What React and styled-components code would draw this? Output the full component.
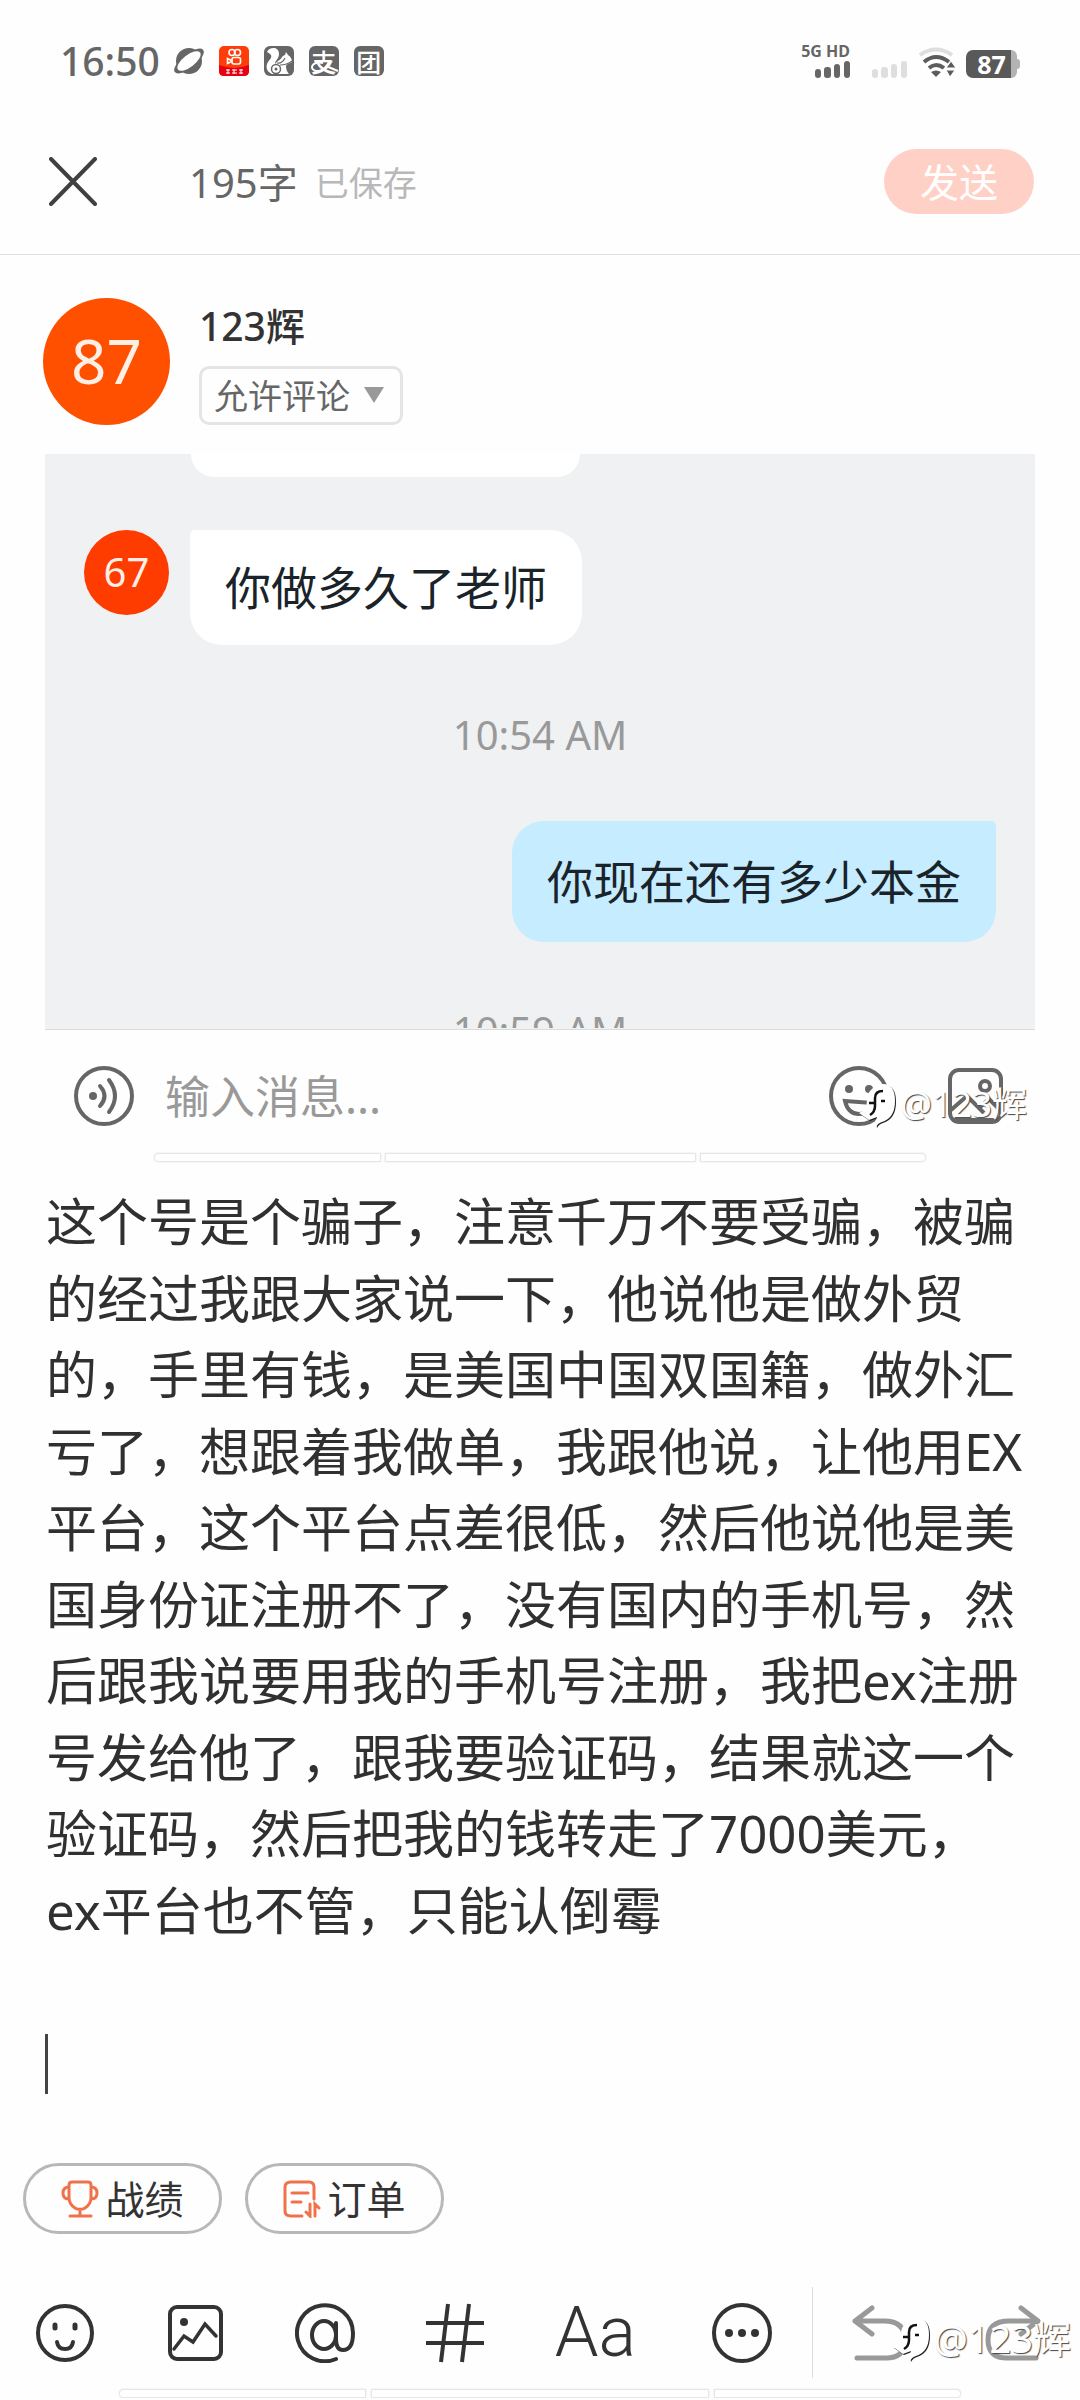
import React from 'react';
import styled, { createGlobalStyle } from 'styled-components';

const story =
  '这个号是个骗子，注意千万不要受骗，被骗的经过我跟大家说一下，他说他是做外贸的，手里有钱，是美国中国双国籍，做外汇亏了，想跟着我做单，我跟他说，让他用EX平台，这个平台点差很低，然后他说他是美国身份证注册不了，没有国内的手机号，然后跟我说要用我的手机号注册，我把ex注册号发给他了，跟我要验证码，结果就这一个验证码，然后把我的钱转走了7000美元，ex平台也不管，只能认倒霉\n\n';

const App = () => {
  return (
    <Page>
      <GlobalStyle />
      <StatusBar>
        <Clock>16:50</Clock>
        <StatusIcons>
          <PlanetIcon />
          <VideoAppIcon />
          <SquirrelIcon />
          <CharIcon char="支" swoosh />
          <CharIcon char="团" />
        </StatusIcons>
        <Signals>
          <Network>
            <span>5G HD</span>
            <SignalBars color="#666" />
          </Network>
          <SignalBars color="#dedede" />
          <WifiIcon />
          <Battery />
        </Signals>
      </StatusBar>

      <Header>
        <IconButton aria-label="关闭">
          <CloseIcon />
        </IconButton>
        <WordCount>195字</WordCount>
        <Saved>已保存</Saved>
        <SendButton>发送</SendButton>
      </Header>

      <Author>
        <Avatar size={127} font={62} bg="#ff5000">87</Avatar>
        <AuthorInfo>
          <AuthorName>123辉</AuthorName>
          <SelectWrap>
            <Select aria-label="评论权限" defaultValue="allow">
              <option value="allow">允许评论</option>
              <option value="deny">禁止评论</option>
            </Select>
            <Triangle viewBox="0 0 20 16">
              <path d="M0 0h20L10 16z" fill="#999" />
            </Triangle>
          </SelectWrap>
        </AuthorInfo>
      </Author>

      <Picture>
        <Chat>
          <Messages>
            <CutBubble />
            <Incoming>
              <Avatar size={85} font={40} bg="#ff3c00">67</Avatar>
              <Bubble>你做多久了老师</Bubble>
            </Incoming>
            <Time>10:54 AM</Time>
            <Outgoing>
              <Bubble mine>你现在还有多少本金</Bubble>
            </Outgoing>
            <Time>10:59 AM</Time>
          </Messages>
        </Chat>
        <InputRow>
          <IconButton aria-label="语音">
            <VoiceIcon />
          </IconButton>
          <MessageInput aria-label="消息" placeholder="输入消息..." />
          <RowIcons>
            <IconButton aria-label="表情">
              <GrinIcon />
            </IconButton>
            <IconButton aria-label="图片">
              <PhotoIcon />
            </IconButton>
          </RowIcons>
          <Watermark size={35} right={8} bottom={24}>
            <MarkIcon />
            @123辉
          </Watermark>
        </InputRow>
        <Segments side={109} gap={4}>
          <Segment grow={227} first />
          <Segment grow={312} />
          <Segment grow={226} last />
        </Segments>
      </Picture>

      <Editor>
        <TextArea aria-label="正文" rows={12} spellCheck={false} defaultValue={story} />
        <Caret />
      </Editor>

      <Chips>
        <Chip>
          <TrophyIcon />
          战绩
        </Chip>
        <Chip>
          <OrderIcon />
          订单
        </Chip>
      </Chips>

      <Toolbar>
        <Tools>
          <IconButton aria-label="表情">
            <SmileIcon />
          </IconButton>
          <IconButton aria-label="图片">
            <ImageIcon />
          </IconButton>
          <IconButton aria-label="提及">
            <AtIcon />
          </IconButton>
          <IconButton aria-label="话题">
            <HashIcon />
          </IconButton>
          <FontButton>Aa</FontButton>
          <IconButton aria-label="更多">
            <MoreIcon />
          </IconButton>
        </Tools>
        <History>
          <IconButton aria-label="撤销">
            <UndoIcon />
          </IconButton>
          <IconButton aria-label="重做">
            <UndoIcon flip />
          </IconButton>
        </History>
        <Watermark size={38} right={9} bottom={15}>
          <MarkIcon />
          @123辉
        </Watermark>
      </Toolbar>
      <Segments side={119} gap={5}>
        <Segment grow={246} first />
        <Segment grow={339} />
        <Segment grow={246} last />
      </Segments>
    </Page>
  );
};

export default App;

/* icons */

const PlanetIcon = () => (
  <svg width="30" height="30" viewBox="0 0 30 30">
    <circle cx="15" cy="15" r="13" fill="#666" />
    <ellipse cx="15" cy="15" rx="18" ry="7" transform="rotate(-38 15 15)" fill="#666" />
    <ellipse cx="15" cy="15" rx="14" ry="6" transform="rotate(-38 15 15)" fill="#fff" />
  </svg>
);

const VideoAppIcon = () => (
  <svg width="30" height="30" viewBox="0 0 30 30">
    <rect width="30" height="30" rx="5" fill="#ff3d0a" />
    <path d="M0 19q15 6 30 0v6q0 5-5 5H5q-5 0-5-5z" fill="#e60012" />
    <g fill="none" stroke="#fff" strokeWidth="1.6">
      <circle cx="13" cy="6.500" r="3" />
      <circle cx="18.500" cy="6.500" r="3" />
      <rect x="13" y="11.500" width="8.500" height="6.500" rx="2" />
      <path d="M12.500 14.500l-4-2v5l4-2z" />
    </g>
    <path d="M7 24h4M7 27h4M9 23v5M13 24h5M13 27h5M15 23v5M20 24h4M20 27h4M22 23v5" stroke="#fff" strokeWidth="1" />
  </svg>
);

const SquirrelIcon = () => (
  <svg width="30" height="30" viewBox="0 0 30 30">
    <rect width="30" height="30" rx="6" fill="#666" />
    <path
      d="M3 6C5 1 15 0 15 8c0 5-4 6-4 10 3-4 6-4 7-7 1-1 2-2 3-2l1-3 2 3c3 2 4 4 4 7-2 2-5 1-6 4 0 3 1 6 3 8H8C3 26 1 21 4 16c2-3 4-4 3-7C6 8 5 7 3 6z"
      fill="#fff"
    />
    <circle cx="12" cy="23" r="4.500" fill="none" stroke="#666" strokeWidth="1.500" />
    <circle cx="12" cy="23" r="1.500" fill="#666" />
    <path d="M13 17q5 1 8-5M16 19q7 0 12-4" fill="none" stroke="#666" strokeWidth="1.200" />
  </svg>
);

const CharIcon = ({ char, swoosh }) => (
  <AppBadge>
    {char}
    {swoosh && (
      <Swoosh viewBox="0 0 30 30">
        <path d="M14 17c-12-3-15 8-5 8 5 0 9-5 11-9M17 20l12 5" fill="none" stroke="#fff" strokeWidth="2" />
      </Swoosh>
    )}
  </AppBadge>
);

const SignalBars = ({ color }) => (
  <svg width="35" height="17" viewBox="0 0 35 17" fill={color}>
    <rect x="0" y="8" width="6" height="9" rx="3" />
    <rect x="9" y="6" width="7" height="11" rx="3" />
    <rect x="19" y="3" width="6" height="14" rx="3" />
    <rect x="29" y="0" width="6" height="17" rx="3" />
  </svg>
);

const WifiIcon = () => (
  <svg width="37" height="31" viewBox="0 0 37 31" fill="none">
    <path d="M2 8Q18 -3 34 8" stroke="#dedede" strokeWidth="4" />
    <path d="M6 15Q18 5 31 15M11 21Q18 15 26 21" stroke="#5c5c5c" strokeWidth="4" />
    <path d="M13 25q5-3 10 0l-5 5z" fill="#5c5c5c" />
    <path d="M28 21l5-7 5 7zM28 23h9l-5 7z" fill="#5c5c5c" stroke="#fff" strokeWidth="1" />
  </svg>
);

const Battery = () => (
  <BatteryBody>
    <BatteryLevel>87</BatteryLevel>
    <BatteryRest />
    <BatteryNub />
  </BatteryBody>
);

const CloseIcon = () => (
  <svg width="48" height="49" viewBox="0 0 48 49">
    <path d="M2 2l44 45M46 2L2 47" stroke="#404040" strokeWidth="4" strokeLinecap="round" />
  </svg>
);

const VoiceIcon = () => (
  <svg width="60" height="60" viewBox="0 0 60 60" fill="none" stroke="#666" strokeWidth="4" strokeLinecap="round">
    <circle cx="30" cy="30" r="28" />
    <circle cx="19" cy="30" r="4" fill="#666" stroke="none" />
    <path d="M26 20q9 10 0 20M35 14q12 16 0 32" />
  </svg>
);

const GrinIcon = () => (
  <svg width="60" height="60" viewBox="0 0 60 60" fill="none" stroke="#666" strokeWidth="4">
    <circle cx="30" cy="30" r="28" />
    <circle cx="20" cy="23" r="4" fill="#666" stroke="none" />
    <circle cx="40" cy="23" r="4" fill="#666" stroke="none" />
    <path d="M16 35l28 2q-3 11-14 11T16 35z" />
  </svg>
);

const PhotoIcon = () => (
  <svg width="55" height="56" viewBox="0 0 55 56" fill="none" stroke="#666" strokeWidth="4">
    <rect x="2" y="2" width="51" height="52" rx="9" />
    <circle cx="37" cy="18" r="5" />
    <path d="M3 42l16-14 17 17M31 40l10-9 11 11M4 52h47" />
  </svg>
);

const TrophyIcon = () => (
  <svg width="38" height="38" viewBox="0 0 38 38" fill="none" stroke="#f0724a" strokeWidth="3" strokeLinecap="round">
    <path d="M8 5q0-3 3-3h16q3 0 3 3v13q0 6-6 10-5 3-10 0-6-4-6-10zM8 7q-6 0-6 6t6 6M30 7q6 0 6 6t-6 6M19 29v7M9 36h21" />
  </svg>
);

const OrderIcon = () => (
  <svg width="38" height="38" viewBox="0 0 38 38" fill="none" stroke="#f0724a" strokeWidth="3" strokeLinecap="round">
    <path d="M19 36H8q-6 0-6-5V7q0-5 6-5h18q5 0 5 5v12M9 13h16M9 22h9M27 24v12l-4-4M32 36V24l4 4" />
  </svg>
);

const SmileIcon = () => (
  <svg width="60" height="60" viewBox="0 0 60 60" fill="none" stroke="#333" strokeWidth="4" strokeLinecap="round">
    <circle cx="30" cy="30" r="27" />
    <path d="M20 22v3M40 22v3" strokeWidth="5" />
    <path d="M22 39q1 7 8 7t8-7" />
  </svg>
);

const ImageIcon = () => (
  <svg width="55" height="56" viewBox="0 0 55 56" fill="none" stroke="#333" strokeWidth="4" strokeLinecap="round">
    <rect x="2" y="2" width="51" height="52" rx="7" />
    <circle cx="16" cy="17" r="4" fill="#333" stroke="none" />
    <path d="M6 44l10-13 9 6 12-18 11 12" strokeWidth="3.500" />
  </svg>
);

const AtIcon = () => (
  <svg width="60" height="60" viewBox="0 0 60 60" fill="none" stroke="#333" strokeWidth="4" strokeLinecap="round">
    <path d="M41 56A28 28 0 1 1 58 30c0 10-3 17-10 17-5 0-7-4-7-11V20" />
    <ellipse cx="29" cy="32" rx="12" ry="14" />
  </svg>
);

const HashIcon = () => (
  <svg width="58" height="60" viewBox="0 0 58 60" fill="none" stroke="#333" strokeWidth="4">
    <path d="M0 20h58M0 40h58M22 1l-7 58M43 1l-7 58" />
  </svg>
);

const MoreIcon = () => (
  <svg width="60" height="60" viewBox="0 0 60 60">
    <circle cx="30" cy="30" r="28" fill="none" stroke="#333" strokeWidth="4" />
    <g fill="#333">
      <circle cx="17" cy="30" r="4" />
      <circle cx="30" cy="30" r="4" />
      <circle cx="43" cy="30" r="4" />
    </g>
  </svg>
);

const UndoIcon = ({ flip }) => (
  <svg width="56" height="56" viewBox="0 0 56 56" fill="none" stroke="#999" strokeWidth="5" strokeLinecap="round" strokeLinejoin="round">
    <path transform={flip ? 'translate(56 0) scale(-1 1)' : undefined} d="M20 3L3 16l17 13M3 16h29q21 0 21 19T32 53H5" />
  </svg>
);

const mark = 'M13 5Q17 0 24 0q12 0 12 17 0 17-13 21-4 1-6 5l-1-6q2-2 2-4l-8 3-10-7q8-3 8-13 0-7 5-11z';

const MarkIcon = () => (
  <svg width="38" height="45" viewBox="0 0 38 45">
    <path transform="translate(1 1)" d={mark} fill="#222" />
    <path d={mark} fill="#fff" />
    <path d="M24 7q-8 0-8 7v8q0 6-5 9M10 19h5M22 17h4" fill="none" stroke="#111" strokeWidth="2.500" />
  </svg>
);

/* styles */

const GlobalStyle = createGlobalStyle`
  * {
    box-sizing: border-box;
  }
  body {
    margin: 0;
    background: #fefefe;
    font-family: "Noto Sans", "Noto Sans CJK SC", sans-serif;
    color: #333;
  }
  svg {
    display: block;
    flex: none;
  }
  button, select, input, textarea {
    font-family: inherit;
    color: inherit;
    margin: 0;
    padding: 0;
    border: none;
    background: none;
    outline: none;
  }
`;

const Page = styled.div`
  display: flex;
  flex-direction: column;
  overflow: hidden;
`;

const StatusBar = styled.div`
  display: flex;
  align-items: center;
  height: 108px;
  padding: 14px 60px 0 60px;
`;

const Clock = styled.span`
  font-size: 39px;
  font-weight: 500;
  line-height: 40px;
  color: #666;
`;

const StatusIcons = styled.div`
  display: flex;
  gap: 15px;
  margin-left: 14px;
`;

const AppBadge = styled.span`
  position: relative;
  display: block;
  width: 30px;
  height: 30px;
  border-radius: 6px;
  background: #666;
  color: #fff;
  font-family: "Noto Sans CJK SC", sans-serif;
  font-size: 25px;
  font-weight: 500;
  line-height: 30px;
  text-align: center;
`;

const Swoosh = styled.svg`
  position: absolute;
  inset: 0;
`;

const Signals = styled.div`
  display: flex;
  align-items: flex-end;
  gap: 11px;
  margin-left: auto;
`;

const Network = styled.div`
  display: flex;
  flex-direction: column;
  align-items: flex-end;
  gap: 2px;
  margin-right: 11px;
  font-size: 16px;
  font-weight: 700;
  line-height: 15px;
  color: #666;
`;

const BatteryBody = styled.div`
  display: flex;
  align-items: center;
  height: 28px;
`;

const BatteryLevel = styled.span`
  width: 45px;
  padding-left: 6px;
  border-radius: 7px 0 0 7px;
  background: #595959;
  color: #fff;
  font-size: 25px;
  font-weight: 700;
  line-height: 28px;
  text-align: center;
`;

const BatteryRest = styled.span`
  width: 6px;
  height: 28px;
  border-radius: 0 7px 7px 0;
  background: #b3b3b3;
`;

const BatteryNub = styled.span`
  width: 3px;
  height: 10px;
  border-radius: 0 3px 3px 0;
  background: #b3b3b3;
`;

const Header = styled.header`
  display: flex;
  align-items: center;
  height: 147px;
  padding: 0 46px 0 49px;
  border-bottom: 1px solid #e2e2e2;
`;

const IconButton = styled.button`
  display: flex;
  align-items: center;
  justify-content: center;
`;

const WordCount = styled.span`
  margin-left: 92px;
  font-size: 40px;
  color: #666;
`;

const Saved = styled.span`
  margin-left: 17px;
  font-size: 34px;
  color: #b8b8b8;
`;

const SendButton = styled.button`
  width: 150px;
  height: 65px;
  margin-left: auto;
  border-radius: 33px;
  background: #ffd0c5;
  color: #fff;
  font-size: 39px;
  line-height: 65px;
`;

const Author = styled.div`
  display: flex;
  gap: 29px;
  padding: 43px 43px 29px;
`;

const Avatar = styled.div`
  flex: none;
  width: ${(p) => p.size}px;
  height: ${(p) => p.size}px;
  border-radius: 50%;
  background: ${(p) => p.bg};
  color: #fdeee6;
  font-size: ${(p) => p.font}px;
  line-height: ${(p) => p.size - 2}px;
  text-align: center;
`;

const AuthorInfo = styled.div`
  display: flex;
  flex-direction: column;
  justify-content: space-between;
  align-items: flex-start;
`;

const AuthorName = styled.div`
  font-size: 39px;
  font-weight: 500;
  line-height: 56px;
`;

const SelectWrap = styled.div`
  position: relative;
`;

const Select = styled.select`
  appearance: none;
  display: block;
  width: 204px;
  height: 59px;
  padding-left: 12px;
  border: 3px solid #e5e5e5;
  border-radius: 10px;
  font-size: 34px;
  color: #666;
`;

const Triangle = styled.svg`
  position: absolute;
  top: 21px;
  right: 19px;
  width: 20px;
  height: 16px;
  pointer-events: none;
`;

const Picture = styled.section`
  margin: 0 45px;
`;

const Chat = styled.div`
  padding-bottom: 1px;
  border-bottom: 1px solid #dcdcdc;
  background: #eff1f3;
`;

const Messages = styled.div`
  height: 574px;
  overflow: hidden;
`;

const CutBubble = styled.div`
  width: 389px;
  height: 23px;
  margin-left: 146px;
  border-radius: 0 0 28px 28px;
  background: #fff;
`;

const Incoming = styled.div`
  display: flex;
  gap: 21px;
  margin: 53px 39px 60px;
`;

const Outgoing = styled.div`
  display: flex;
  justify-content: flex-end;
  margin: 56px 39px 59px;
`;

const Bubble = styled.div`
  padding: 0 35px;
  border-radius: ${(p) => (p.mine ? '32px 5px 32px 32px' : '5px 32px 32px 32px')};
  background: ${(p) => (p.mine ? '#c5ecff' : '#fff')};
  color: #1a2329;
  font-size: 46px;
  line-height: ${(p) => (p.mine ? 121 : 115)}px;
`;

const Time = styled.div`
  text-align: center;
  font-size: 40px;
  line-height: 60px;
  color: #999;
`;

const InputRow = styled.div`
  position: relative;
  display: flex;
  align-items: center;
  height: 123px;
  padding: 9px 32px 0 29px;
`;

const MessageInput = styled.input`
  flex: 1;
  min-width: 0;
  margin-left: 31px;
  font-size: 45px;

  &::placeholder {
    color: #999;
    opacity: 1;
  }
`;

const RowIcons = styled.div`
  display: flex;
  align-items: center;
  gap: 59px;
`;

const Segments = styled.div`
  display: flex;
  gap: ${(p) => p.gap}px;
  padding: 0 ${(p) => p.side}px;
`;

const Segment = styled.div`
  flex: ${(p) => p.grow} 0 0;
  height: 9px;
  border: 1px solid #e6e6e6;
  border-radius: ${(p) => (p.first ? '5px 1px 1px 5px' : p.last ? '1px 5px 5px 1px' : '1px')};
  background: #fff;
  box-shadow: 0 0 2px #e0e0e0;
`;

const Watermark = styled.div`
  position: absolute;
  right: ${(p) => p.right}px;
  bottom: ${(p) => p.bottom}px;
  display: flex;
  align-items: center;
  gap: 3px;
  color: #fff;
  font-size: ${(p) => p.size}px;
  line-height: 46px;
  text-shadow: 1px 1px 1px #444;
  pointer-events: none;

  svg {
    margin-top: 6px;
  }
`;

const Editor = styled.div`
  position: relative;
  padding: 21px 50px 0 46px;
`;

const TextArea = styled.textarea`
  display: block;
  width: 100%;
  overflow: hidden;
  resize: none;
  color: #303030;
  font-size: 51px;
  line-height: 1.5;
`;

const Caret = styled.i`
  position: absolute;
  left: 45px;
  bottom: 7px;
  width: 3px;
  height: 60px;
  background: #444;
`;

const Chips = styled.div`
  display: flex;
  gap: 23px;
  padding: 62px 23px 53px;
`;

const Chip = styled.button`
  display: flex;
  align-items: center;
  justify-content: center;
  gap: 6px;
  width: 199px;
  height: 71px;
  border: 3px solid #b8b8b8;
  border-radius: 36px;
  font-size: 39px;
  line-height: 38px;
`;

const Toolbar = styled.div`
  position: relative;
  display: grid;
  grid-template-columns: 813fr 267fr;
  height: 91px;
  margin-bottom: 11px;
`;

const Tools = styled.div`
  display: grid;
  grid-template-columns: 130fr 130fr 130fr 130fr 151fr 141fr;
  border-right: 1px solid #ddd;
`;

const FontButton = styled.button`
  font-family: Roboto, sans-serif;
  font-size: 70px;
  font-weight: 300;
  line-height: 91px;
`;

const History = styled.div`
  display: flex;
  align-items: center;
  justify-content: space-between;
  padding: 0 39px;
`;
